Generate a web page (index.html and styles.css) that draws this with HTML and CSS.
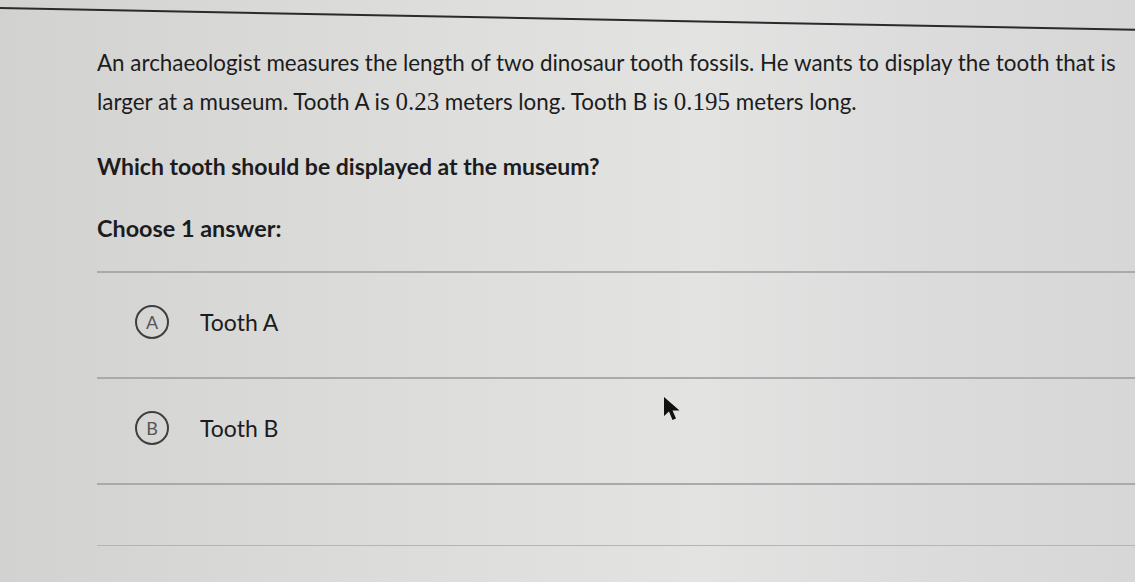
FILE: index.html
```html
<!DOCTYPE html>
<html lang="en">
<head>
<meta charset="utf-8">
<title>Question</title>
<link rel="stylesheet" href="styles.css">
</head>
<body>
<div class="screen">
  <div class="top-edge"></div>
  <main class="content">
    <p class="question">An archaeologist measures the length of two dinosaur tooth fossils. He wants to display the tooth that is larger at a museum. Tooth A is <span class="math">0.23</span> meters long. Tooth B is <span class="math">0.195</span> meters long.</p>
    <p class="prompt">Which tooth should be displayed at the museum?</p>
    <p class="choose">Choose 1 answer:</p>
    <ul class="choices">
      <li class="choice"><span class="bubble">A</span><span class="label">Tooth A</span></li>
      <li class="choice"><span class="bubble">B</span><span class="label">Tooth B</span></li>
    </ul>
    <div class="footer-rule"></div>
  </main>
  <svg class="cursor" width="22" height="28" viewBox="0 0 22 28"><path d="M2 1 L2 20 L7 15.5 L10.5 24 L14 22.5 L10.5 14.5 L17.5 14.5 Z" fill="#111"/></svg>
</div>
</body>
</html>
```
FILE: styles.css
```css
html, body {
  margin: 0;
  padding: 0;
}
body {
  width: 1135px;
  height: 582px;
  overflow: hidden;
  font-family: Lato, "Open Sans", sans-serif;
  color: #1c1c1e;
  background: linear-gradient(90deg, #d2d3d1 0%, #d8d8d6 20%, #dfdfdd 45%, #e3e3e2 62%, #dbdcdb 80%, #d6d7d6 100%);
}
.screen {
  position: relative;
  width: 1135px;
  height: 582px;
}
.top-edge {
  position: absolute;
  left: -10px;
  top: 18px;
  width: 1160px;
  height: 2px;
  background: #2a2a2a;
  transform: rotate(1.1deg);
}
.content {
  padding: 43px 0 0 97px;
}
.question {
  margin: 0;
  padding-right: 4px;
  font-size: 22.4px;
  line-height: 39px;
}
.math {
  font-family: "Liberation Serif", "DejaVu Serif", serif;
  font-size: 25px;
  line-height: 1;
}
.prompt {
  margin: 26px 0 0;
  font-size: 23px;
  line-height: 39px;
  font-weight: 700;
}
.choose {
  margin: 23px 0 0;
  font-size: 23.4px;
  line-height: 39px;
  font-weight: 700;
}
.choices {
  list-style: none;
  margin: 23px 0 0;
  padding: 0;
  border-top: 2px solid #a9aaa9;
}
.choice {
  display: flex;
  align-items: center;
  box-sizing: border-box;
  height: 106px;
  padding-left: 38px;
  padding-bottom: 7px;
  border-bottom: 2px solid #a9aaa9;
}
.bubble {
  box-sizing: border-box;
  width: 34px;
  height: 34px;
  border: 2px solid #3f3f3f;
  border-radius: 50%;
  display: flex;
  align-items: center;
  justify-content: center;
  font-size: 18px;
  color: #555;
}
.label {
  margin-left: 31px;
  font-size: 23px;
}
.footer-rule {
  margin-top: 60px;
  height: 1px;
  background: #b4b5b4;
}
.cursor {
  position: absolute;
  left: 662px;
  top: 396px;
}
```
